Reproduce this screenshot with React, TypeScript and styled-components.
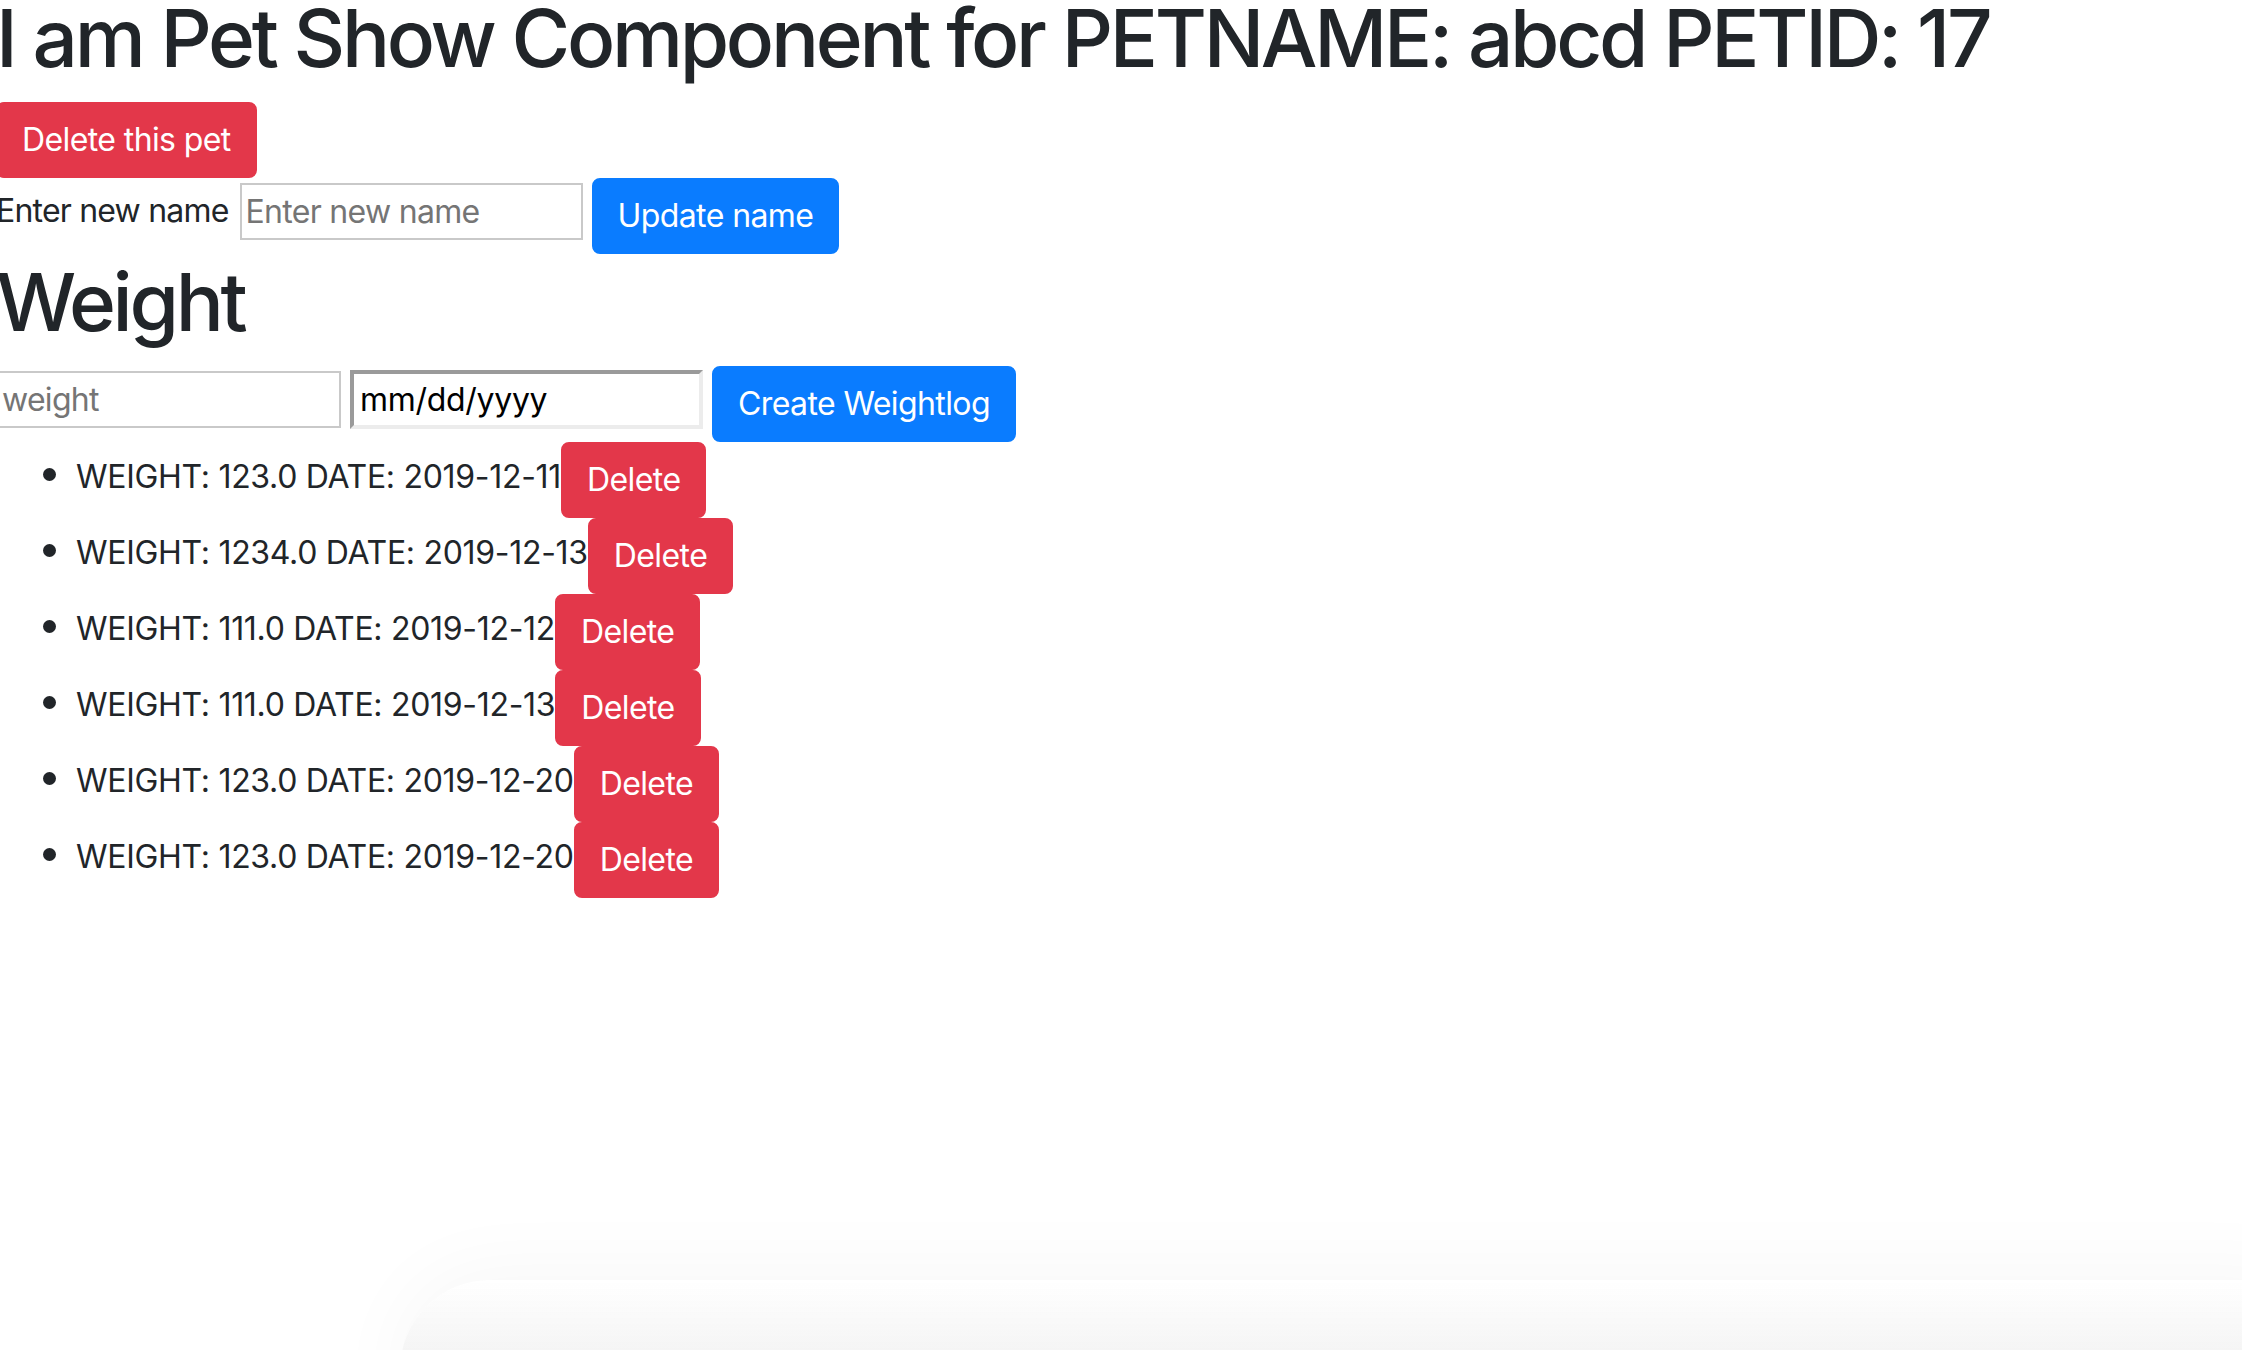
import React from "react";
import styled, { createGlobalStyle } from "styled-components";

const GlobalStyle = createGlobalStyle`
  html, body {
    margin: 0;
    padding: 0;
    background: #ffffff;
  }
  body {
    font-family: Inter, "Noto Sans", "Liberation Sans", sans-serif;
    font-size: 32px;
    line-height: 1.5;
    color: #212529;
    overflow: hidden;
  }
  * { box-sizing: border-box; }
`;

const Page = styled.main`
  margin: 0 0 0 -4px;
  min-height: 1350px;
`;

const Heading = styled.h1<{ $lead?: boolean }>`
  margin: 0 0 ${(p) => (p.$lead ? "26px" : "16px")} 0;
  font-size: 80px;
  font-weight: 500;
  line-height: ${(p) => (p.$lead ? "76px" : "96px")};
  letter-spacing: -3.3px;
  color: #212529;
  white-space: nowrap;
`;

const ButtonLine = styled.div`
  display: flex;
  align-items: flex-start;
`;

const Button = styled.button<{ $variant: "danger" | "primary" }>`
  display: inline-block;
  margin: 0;
  padding: 12px 24px;
  border: 2px solid ${(p) => (p.$variant === "danger" ? "#e3374a" : "#0a7cff")};
  border-radius: 8px;
  background: ${(p) => (p.$variant === "danger" ? "#e3374a" : "#0a7cff")};
  color: #ffffff;
  font-family: inherit;
  font-size: 32px;
  font-weight: 400;
  line-height: 48px;
  letter-spacing: -0.6px;
  white-space: nowrap;
  cursor: pointer;
`;

const FormRow = styled.div`
  display: flex;
  align-items: flex-start;
  gap: 9px;
`;

const Label = styled.label`
  margin-top: 9px;
  margin-right: 2px;
  font-size: 32px;
  line-height: 48px;
  letter-spacing: -0.8px;
  white-space: nowrap;
`;

const TextInput = styled.input<{ $width: number; $top: number }>`
  width: ${(p) => p.$width}px;
  height: 57px;
  margin: ${(p) => p.$top}px 0 0 0;
  padding: 2px 4px;
  border: 2px solid #c9c9c9;
  border-radius: 0;
  background: #ffffff;
  font-family: inherit;
  font-size: 32px;
  line-height: 48px;
  letter-spacing: -0.7px;
  color: #000000;
  outline: none;
  &::placeholder {
    color: #757575;
    opacity: 1;
  }
`;

const DateInput = styled.input`
  width: 353px;
  height: 59px;
  margin: 4px 0 0 0;
  padding: 0 6px;
  border-style: solid;
  border-width: 4px;
  border-color: #9a9a9a #ececec #ececec #9a9a9a;
  border-radius: 0;
  background: #ffffff;
  font-family: inherit;
  font-size: 32px;
  line-height: 48px;
  letter-spacing: -0.3px;
  color: #000000;
  outline: none;
`;

const WeightList = styled.ul`
  margin: 0 0 32px 0;
  padding-left: 80px;
`;

const WeightItem = styled.li`
  font-size: 32px;
  line-height: 48px;
  letter-spacing: -0.3px;
  white-space: nowrap;
  &::marker {
    font-size: 40px;
  }
  & > button {
    vertical-align: -3px;
  }
`;

const Shadow = styled.div`
  position: fixed;
  left: 400px;
  right: -60px;
  bottom: -80px;
  height: 150px;
  border-radius: 90px 0 0 0;
  box-shadow: 0 -10px 80px rgba(0, 0, 0, 0.035);
  background: linear-gradient(to bottom, rgba(255, 255, 255, 0), rgba(238, 238, 238, 0.7) 55%);
  pointer-events: none;
`;

const logs = [
  { weight: "123.0", date: "2019-12-11" },
  { weight: "1234.0", date: "2019-12-13" },
  { weight: "111.0", date: "2019-12-12" },
  { weight: "111.0", date: "2019-12-13" },
  { weight: "123.0", date: "2019-12-20" },
  { weight: "123.0", date: "2019-12-20" },
];

export default function App() {
  return (
    <>
      <GlobalStyle />
      <Page>
        <Heading $lead>I am Pet Show Component for PETNAME: abcd PETID: 17</Heading>
        <ButtonLine>
          <Button $variant="danger">Delete this pet</Button>
        </ButtonLine>
        <FormRow>
          <Label htmlFor="newname">Enter new name</Label>
          <TextInput id="newname" placeholder="Enter new name" $width={343} $top={5} />
          <Button $variant="primary">Update name</Button>
        </FormRow>
        <Heading>Weight</Heading>
        <FormRow>
          <TextInput placeholder="weight" $width={345} $top={5} />
          <DateInput defaultValue="mm/dd/yyyy" />
          <Button $variant="primary">Create Weightlog</Button>
        </FormRow>
        <WeightList>
          {logs.map((l, i) => (
            <WeightItem key={i}>
              WEIGHT: {l.weight} DATE: {l.date}
              <Button $variant="danger">Delete</Button>
            </WeightItem>
          ))}
        </WeightList>
      </Page>
      <Shadow />
    </>
  );
}
